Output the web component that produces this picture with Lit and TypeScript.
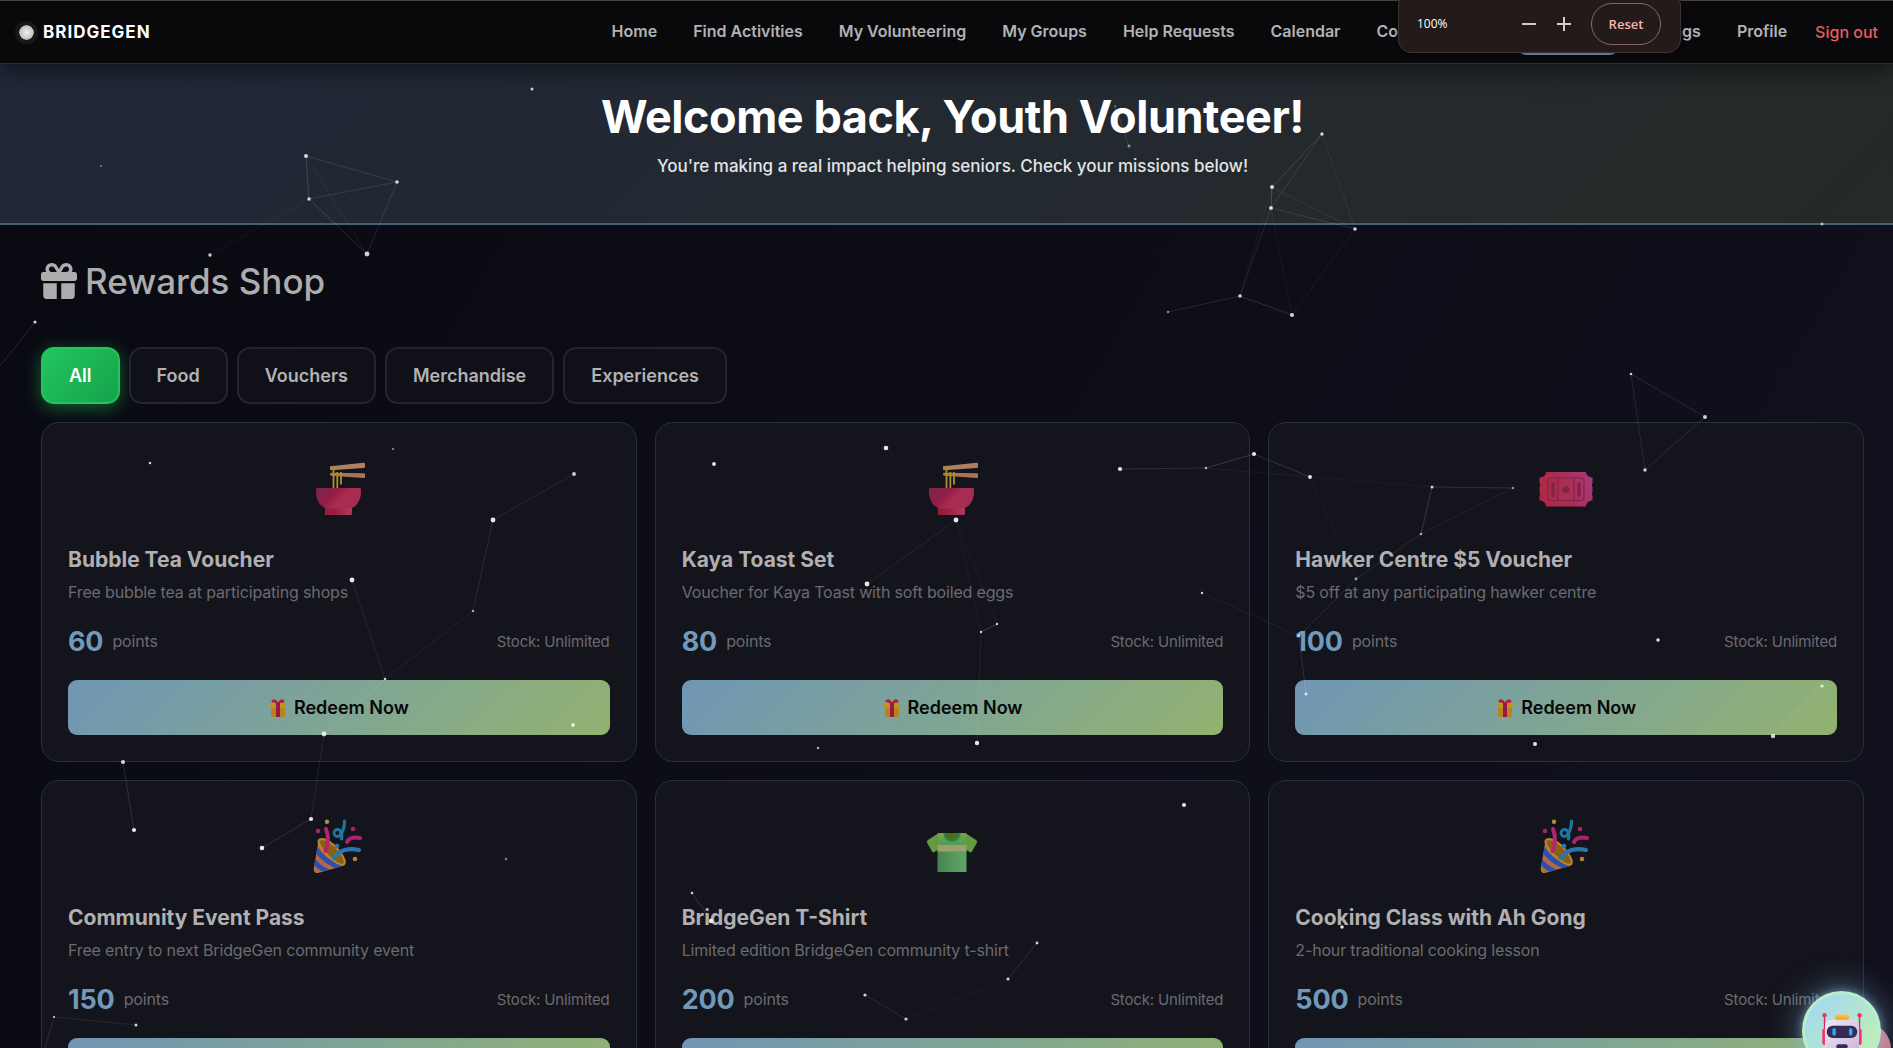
import { LitElement, html, css, svg } from "lit";
import { customElement, property, state } from "lit/decorators.js";
import { classMap } from "lit/directives/class-map.js";

type Art = "noodles" | "ticket" | "party" | "shirt";

interface Reward {
  name: string;
  description: string;
  points: number;
  art: Art;
  category: string;
}

const REWARDS: Reward[] = [
  { name: "Bubble Tea Voucher", description: "Free bubble tea at participating shops", points: 60, art: "noodles", category: "Food" },
  { name: "Kaya Toast Set", description: "Voucher for Kaya Toast with soft boiled eggs", points: 80, art: "noodles", category: "Food" },
  { name: "Hawker Centre $5 Voucher", description: "$5 off at any participating hawker centre", points: 100, art: "ticket", category: "Vouchers" },
  { name: "Community Event Pass", description: "Free entry to next BridgeGen community event", points: 150, art: "party", category: "Experiences" },
  { name: "BridgeGen T-Shirt", description: "Limited edition BridgeGen community t-shirt", points: 200, art: "shirt", category: "Merchandise" },
  { name: "Cooking Class with Ah Gong", description: "2-hour traditional cooking lesson", points: 500, art: "party", category: "Experiences" },
];

const CATEGORIES = ["All", "Food", "Vouchers", "Merchandise", "Experiences"];

const LINKS = [
  "Home", "Find Activities", "My Volunteering", "My Groups", "Help Requests",
  "Calendar", "Communication", "Rewards", "Settings", "Profile",
];

const noodles = svg`
  <defs>
    <linearGradient id="bowl" x1="0" x2="1" y1="0.2" y2="0.6">
      <stop offset="0" stop-color="#7a2744"/><stop offset="0.35" stop-color="#931b48"/>
      <stop offset="0.6" stop-color="#aa2b52"/><stop offset="1" stop-color="#a52c53"/>
    </linearGradient>
    <linearGradient id="foot" x1="0" x2="1" y1="0" y2="0">
      <stop offset="0" stop-color="#8c2136"/><stop offset="0.4" stop-color="#a01d40"/><stop offset="1" stop-color="#b03c60"/>
    </linearGradient>
  </defs>
  <path d="M19 5.2 52.500 1.700Q54 1.600 54 3V5.800Q54 6.800 53 6.900L20 9.200Q19 9.200 19 8Z" fill="#ae7f60"/>
  <path d="M19.500 11.800 53 12.200Q54 12.300 54 13.300V16Q54 17.200 53 17.100L20 14.800Q19 14.600 19 13.200Z" fill="#a87657"/>
  <path d="M22.500 5V28M26.300 11V28M30 11V23.500" stroke="#b08f28" stroke-width="1.800" fill="none"/>
  <path d="M14 45H41L40.800 54H13.800Z" fill="url(#foot)"/>
  <path d="M5 28Q5 27 6 27H49Q50 27 50 28V31C50 39 45.500 47 38 47.500H17C9.500 47 5 39 5 31Z" fill="url(#bowl)"/>`;

const ticket = svg`
  <defs>
    <linearGradient id="tick" x1="0" x2="1" y1="0.6" y2="0.4">
      <stop offset="0" stop-color="#ae2843"/><stop offset="0.55" stop-color="#a92f58"/><stop offset="1" stop-color="#a93779"/>
    </linearGradient>
  </defs>
  <path d="M8 11H48C48 14 51 16.500 54.500 16.500V22A3.300 3.300 0 0 0 54.500 26V31A3.300 3.300 0 0 0 54.500 35V39.500C51 39.500 48 42 48 45.500H8C8 42 5 39.500 1.500 39.500V35A3.300 3.300 0 0 0 1.500 31V26A3.300 3.300 0 0 0 1.500 22V16.500C5 16.500 8 14 8 11Z" fill="url(#tick)"/>
  <g stroke="#842442" fill="none" stroke-width="1.200">
    <rect x="10" y="17" width="36" height="22.500" rx="3"/>
    <path d="M20 17V39.500M36 17V39.500"/>
  </g>
  <g fill="#842442">
    <rect x="13.300" y="21" width="3.400" height="15" rx="1.700"/>
    <rect x="39.300" y="21" width="3.400" height="15" rx="1.700"/>
    <circle cx="28" cy="28.500" r="3.500"/>
  </g>`;

const party = svg`
  <defs>
    <clipPath id="cone"><path d="M7 24.500C6 22 7 20 9.500 20.500 17 21 33 36 34 42 34.500 45 33 46.500 30 47.500L9 53.500C4.500 55 2.500 53 2.800 49Z"/></clipPath>
  </defs>
  <g clip-path="url(#cone)">
    <path d="M0 15H40V56H0Z" fill="#b36943"/>
    <g stroke="#2b50b0" stroke-width="5" fill="none">
      <path d="M3 27Q11 42 30 49"/>
      <path d="M-1 37Q6 49 20 54"/>
    </g>
    <path d="M-4 45Q2 54 10 57" stroke="#b87a38" stroke-width="4" fill="none"/>
  </g>
  <path d="M9 20.500C14 18.500 23 25 28 31.500S35.500 44 32.500 45.500 21 41.500 15 35 5.500 22 9 20.500Z" fill="#876016" stroke="#b8862f" stroke-width="2"/>
  <path d="M15 10C18 17 17.500 24 14.500 32" stroke="#b52370" stroke-width="4" fill="none" stroke-linecap="round"/>
  <path d="M23 39C28 31 38 28.500 48 31" stroke="#2b74b0" stroke-width="4.200" fill="none" stroke-linecap="round"/>
  <path d="M36 23C38 19 43 18 49 19" stroke="#ad2172" stroke-width="4" fill="none" stroke-linecap="round"/>
  <path d="M33.500 2C33.500 7 32.500 12 29.500 15.500M30.500 14Q31 17 30.500 20" stroke="#1f74a0" stroke-width="3.200" fill="none" stroke-linecap="round"/>
  <circle cx="26.500" cy="14" r="3.500" stroke="#1f74a0" stroke-width="2.800" fill="none"/>
  <circle cx="16" cy="2.800" r="2.200" fill="#b18f3e"/>
  <circle cx="7" cy="12" r="2.300" fill="#ab2172"/>
  <circle cx="42" cy="10" r="2.300" fill="#ab2172"/>
  <circle cx="26" cy="27" r="2.300" fill="#2a76b0"/>
  <circle cx="44" cy="40" r="2.300" fill="#b38136"/>`;

const shirt = svg`
  <defs>
    <linearGradient id="body" x1="0" x2="1" y1="0" y2="0">
      <stop offset="0" stop-color="#47814e"/><stop offset="0.6" stop-color="#579c5c"/><stop offset="1" stop-color="#5ba466"/>
    </linearGradient>
    <linearGradient id="yoke" x1="0" x2="0" y1="0" y2="1">
      <stop offset="0" stop-color="#7aa43e"/><stop offset="1" stop-color="#519d57"/>
    </linearGradient>
  </defs>
  <g transform="translate(0 2)">
    <path d="M14 12.500 4 19Q2.500 20 3 21.500L8 30.500Q9 32 10.500 31L14 28.500ZM42 12.500 52 19Q53.500 20 53 21.500L48 30.500Q47 32 45.500 31L42 28.500Z" fill="#659b3e"/>
    <path d="M13.500 12.500H42.500V51H13.500Z" fill="url(#body)"/>
    <path d="M13.500 13Q14 12 16 12H40Q42 12 42.500 13V24H13.500Z" fill="url(#yoke)"/>
    <path d="M13.500 24H42.500V30.500H13.500Z" fill="#9b9f70"/>
    <path d="M20.500 12C20.500 17 24 20 28 20S35.500 17 35.500 12Z" fill="#4f6c18"/>
    <path d="M20.500 12C20.500 17 24 20 28 20S35.500 17 35.500 12" fill="none" stroke="#248a50" stroke-width="2.200"/>
  </g>`;

const ART: Record<Art, unknown> = { noodles, ticket, party, shirt };

@customElement("reward-card")
export class RewardCard extends LitElement {
  @property({ attribute: false }) reward!: Reward;

  static styles = css`
    :host { display: block; }
    .card {
      box-sizing: border-box;
      height: 100%;
      padding: 26px;
      border: 1px solid #27313d;
      border-radius: 18px;
      background: #14141c;
    }
    .art { display: flex; justify-content: center; align-items: center; height: 80px; }
    .art svg { width: 56px; height: 56px; }
    .name { margin: 18px 0 6px; font-size: 21px; line-height: 26px; font-weight: 700; color: #b0b0b1; }
    .description { margin: 0; font-size: 16px; line-height: 26px; color: #6b6b70; letter-spacing: -0.01em; }
    .facts { display: flex; align-items: center; justify-content: space-between; margin: 18px 0 21px; height: 36px; font-size: 16px; color: #6b6b70; letter-spacing: -0.01em; }
    .price { display: flex; align-items: center; gap: 9px; }
    .points { font-size: 27px; font-weight: 700; color: #7199b9; }
    .stock { font-size: 15px; }
    .redeem {
      display: flex;
      align-items: center;
      justify-content: center;
      gap: 7px;
      width: 100%;
      height: 55px;
      padding: 0;
      border: 0;
      border-radius: 9px;
      background: linear-gradient(135deg, #7096b5, #7fa595 50%, #92b26f);
      color: #060807;
      font: 600 18px Inter, "Liberation Sans", sans-serif;
      cursor: pointer;
    }
    .redeem svg { width: 18px; height: 20px; }
  `;

  render() {
    const r = this.reward;
    return html`
      <article class="card">
        <div class="art"><svg viewBox="0 0 56 56" aria-hidden="true">${ART[r.art]}</svg></div>
        <h3 class="name">${r.name}</h3>
        <p class="description">${r.description}</p>
        <div class="facts">
          <span class="price"><span class="points">${r.points}</span><span>points</span></span>
          <span class="stock">Stock: Unlimited</span>
        </div>
        <button class="redeem" type="button">
          <svg viewBox="0 0 18 20" aria-hidden="true">
            <path d="M2 8H16V18Q16 19 15 19H3Q2 19 2 18Z" fill="#b5841f"/>
            <path d="M1 5.500Q1 4.500 2 4.500H16Q17 4.500 17 5.500V9Q17 10 16 10H2Q1 10 1 9Z" fill="#c0902a"/>
            <path d="M7 4H11V19H7Z" fill="#981a42"/>
            <path d="M9 5C7 5 3 5 2.500 3.500S5 1 6 1.500 8.500 3 9 5C9.500 3 11 2 12 1.500S15.500 2 15.500 3.500 11 5 9 5Z" fill="#ad2233"/>
          </svg>
          <span>Redeem Now</span>
        </button>
      </article>
    `;
  }
}

/* Particles: x, y, radius, brightness. */
const DOTS: number[][] = [
  [532, 89, 1.5, 0.8], [101, 166, 1, 0.4], [306, 156, 2, 0.8], [397, 182, 1.8, 0.8], [309, 199, 1.7, 0.8],
  [367, 254, 2.400, 0.8], [210, 255, 1.7, 0.8], [35, 322, 1.6, 0.8], [909, 135, 1.7, 0.6], [1115, 106, 1, 0.4],
  [1129, 146, 1.500, 0.5], [1168, 312, 1.300, 0.5], [1322, 134, 1.700, 0.8], [1272, 187, 2, 0.8], [1271, 208, 2, 0.8],
  [1355, 229, 1.800, 0.8], [1292, 315, 2.100, 0.8], [1240, 296, 1.800, 0.8], [1822, 224, 1.600, 0.6], [1631, 374, 1.300, 0.8],
  [1705, 417, 2, 0.8], [1645, 470, 1.700, 0.8], [150, 463, 1.300, 0.8], [393, 449, 1, 0.6], [574, 474, 1.900, 0.8],
  [493, 520, 2.400, 0.9], [473, 611, 1.300, 0.6], [352, 580, 2.400, 0.9], [385, 679, 1.300, 0.8], [324, 734, 2.400, 0.8],
  [573, 725, 1.900, 0.8], [123, 762, 2.100, 0.8], [311, 819, 2.100, 0.9], [262, 848, 2.300, 0.9], [134, 830, 2.100, 0.9],
  [506, 859, 1.200, 0.5], [54, 1017, 1.100, 0.8], [136, 1025, 1.500, 0.8], [714, 464, 1.900, 0.9], [886, 448, 2.300, 0.9],
  [956, 520, 2.400, 0.9], [867, 584, 2.400, 0.9], [997, 624, 1.200, 0.8], [981, 632, 1.200, 0.8], [977, 743, 2.200, 0.9],
  [818, 748, 1.200, 0.7], [1120, 469, 2.100, 0.9], [1206, 468, 1.200, 0.7], [1254, 454, 2.100, 0.9], [1202, 593, 1.200, 0.8],
  [1310, 477, 1.900, 0.9], [1432, 487, 1.500, 0.8], [1513, 488, 1.200, 0.5], [1421, 534, 1.300, 0.6], [1356, 579, 1.400, 0.6],
  [1299, 636, 1.400, 0.7], [1306, 694, 1.400, 0.8], [1658, 640, 1.700, 0.9], [1535, 744, 2, 0.9], [1822, 686, 1.600, 0.8],
  [1773, 736, 2.200, 0.8], [692, 893, 1.300, 0.8], [711, 921, 2.200, 0.9], [1184, 805, 2, 0.9], [1037, 943, 1.400, 0.8],
  [1008, 979, 1.600, 0.8], [906, 1019, 1.600, 0.8], [865, 995, 1.600, 0.8], [1342, 927, 1.700, 0.9],
];

/* Links: x1, y1, x2, y2, opacity. */
const EDGES: number[][] = [
  [306, 156, 397, 182, 0.1], [306, 156, 309, 199, 0.15], [397, 182, 309, 199, 0.1], [309, 199, 367, 254, 0.12],
  [306, 156, 367, 254, 0.05], [397, 182, 367, 254, 0.1], [309, 199, 210, 255, 0.05], [35, 322, 0, 366, 0.12],
  [1115, 106, 1129, 146, 0.12], [1322, 134, 1272, 187, 0.12], [1322, 134, 1271, 208, 0.1], [1322, 134, 1355, 229, 0.06],
  [1272, 187, 1271, 208, 0.18], [1272, 187, 1355, 229, 0.07], [1271, 208, 1355, 229, 0.1], [1272, 187, 1240, 296, 0.05],
  [1271, 208, 1240, 296, 0.1], [1271, 208, 1292, 315, 0.05], [1355, 229, 1292, 315, 0.06], [1240, 296, 1292, 315, 0.14],
  [1240, 296, 1168, 312, 0.1], [1631, 374, 1705, 417, 0.1], [1705, 417, 1645, 470, 0.1], [1631, 374, 1645, 470, 0.09],
  [574, 474, 493, 520, 0.09], [493, 520, 473, 611, 0.09], [473, 611, 385, 679, 0.06], [352, 580, 385, 679, 0.07],
  [385, 679, 324, 734, 0.12], [393, 449, 493, 520, 0.02], [324, 734, 311, 819, 0.08], [311, 819, 262, 848, 0.12],
  [123, 762, 134, 830, 0.12], [54, 1017, 136, 1025, 0.08], [54, 1017, 45, 1048, 0.1], [136, 1025, 110, 1043, 0.02],
  [886, 448, 956, 520, 0.06], [956, 520, 867, 584, 0.07], [956, 520, 997, 624, 0.04], [956, 520, 981, 632, 0.04],
  [997, 624, 981, 632, 0.2], [981, 632, 977, 743, 0.06], [997, 624, 977, 743, 0.02], [1120, 469, 1206, 468, 0.12],
  [1206, 468, 1254, 454, 0.15], [1206, 468, 1202, 593, 0.02], [1202, 593, 1299, 636, 0.06], [1254, 454, 1310, 477, 0.13],
  [1206, 468, 1310, 477, 0.05], [1310, 477, 1356, 579, 0.04], [1310, 477, 1432, 487, 0.03], [1432, 487, 1513, 488, 0.12],
  [1432, 487, 1421, 534, 0.15], [1513, 488, 1421, 534, 0.07], [1421, 534, 1356, 579, 0.1], [1432, 487, 1356, 579, 0.02],
  [1356, 579, 1299, 636, 0.1], [1299, 636, 1306, 694, 0.12], [1822, 686, 1773, 736, 0.15], [692, 893, 711, 921, 0.12],
  [1037, 943, 1008, 979, 0.12], [1008, 979, 906, 1019, 0.04], [906, 1019, 865, 995, 0.1],
];

@customElement("app-root")
export class AppRoot extends LitElement {
  @state() private category = "All";

  static styles = css`
    :host {
      display: flex;
      flex-direction: column;
      position: relative;
      height: 100vh;
      overflow: hidden;
      background: linear-gradient(120deg, #090911, #0c0c16 35%, #11101d);
      font-family: Inter, "Liberation Sans", sans-serif;
      color: #b0b0b1;
    }
    .bar {
      position: relative;
      z-index: 1;
      display: flex;
      align-items: center;
      justify-content: space-between;
      box-sizing: border-box;
      flex: none;
      height: 64px;
      padding: 0 15px;
      border-top: 1px solid #4b3f40;
      border-bottom: 1px solid #273039;
      background: #09090b;
      box-shadow: 0 6px 22px rgba(0, 0, 0, 0.5);
    }
    .brand { display: flex; align-items: center; gap: 5px; color: #fff; font-size: 17px; font-weight: 700; letter-spacing: 1px; text-decoration: none; }
    .orb { width: 15px; height: 15px; border: 4px solid #18181a; border-radius: 50%; background: radial-gradient(#eee, #aaa); background-clip: padding-box; }
    .links { display: flex; align-items: center; align-self: stretch; }
    .link { display: flex; align-items: center; height: 44px; padding: 0 18px; border-bottom: 2px solid transparent; border-radius: 9px; color: #b2b2b3; font-size: 16px; font-weight: 600; text-decoration: none; white-space: nowrap; }
    .current { border-bottom-color: #7db4e2; color: #fff; }
    .signout { padding-left: 10px; color: #e85c60; font-size: 16px; font-weight: 500; text-decoration: none; }
    .page { flex: 1; min-height: 0; overflow-y: auto; scrollbar-width: none; }
    .hero {
      padding: 25px 0 46px 12px;
      border-bottom: 2px solid #485f72;
      background: linear-gradient(135deg, #202738, #222932 40%, #252928);
      text-align: center;
    }
    .welcome { margin: 0; font-size: 45px; line-height: 56px; font-weight: 700; letter-spacing: -0.01em; color: #fff; }
    .mission { margin: 10px 0 0; font-size: 17px; line-height: 22px; font-weight: 500; color: #e2e4e5; }
    .shop { padding: 34px 29px 36px 41px; }
    .heading { display: flex; align-items: center; gap: 8px; margin: 0; font-size: 35px; line-height: 44px; font-weight: 500; color: #adadae; }
    .heading svg { width: 36px; height: 36px; fill: currentColor; }
    .filters { display: flex; flex-wrap: wrap; gap: 9px; margin: 44px 0 18px; }
    .filter { height: 57px; padding: 0 26px; border: 2px solid #25252d; border-radius: 13px; background: #101018; color: #b2b2b4; font: 600 18px Inter, "Liberation Sans", sans-serif; cursor: pointer; }
    .active { border-color: #22c55e; background: linear-gradient(135deg, #22c55e, #16a34a); color: #fff; box-shadow: 0 4px 18px rgba(34, 197, 94, 0.45); }
    .grid { display: grid; grid-template-columns: repeat(3, 1fr); gap: 18px; }
    .particles { position: absolute; inset: 0; width: 100%; height: 100%; pointer-events: none; }
    .zoom {
      position: absolute;
      z-index: 2;
      top: -8px;
      right: 212px;
      display: flex;
      align-items: center;
      box-sizing: border-box;
      width: 283px;
      height: 61px;
      padding: 2px 19px 0 18px;
      border: 1px solid #40322f;
      border-radius: 13px;
      background: #231b1a;
      color: #fff;
      font-family: "Open Sans", "Noto Sans", sans-serif;
      font-size: 12px;
      box-shadow: 0 2px 5px rgba(0, 0, 0, 0.5);
    }
    .level { flex: 1; }
    .step { display: flex; justify-content: center; align-items: center; width: 35px; height: 35px; padding: 0; border: 0; background: none; color: #d8c9c8; }
    .step svg { width: 14px; height: 14px; stroke: currentColor; stroke-width: 2; }
    .reset { width: 70px; height: 42px; margin-left: 10px; padding: 0; border: 1px solid #8d666b; border-radius: 21px; background: none; color: #ffb1b3; font: 600 13px "Open Sans", "Noto Sans", sans-serif; }
    .helper { position: absolute; z-index: 1; right: 12px; bottom: -22px; width: 79px; height: 79px; }
    .badge { position: absolute; left: 37px; top: 32px; width: 52px; height: 52px; border-radius: 50%; background: #cf7883; }
    .bot { position: absolute; inset: 0; display: flex; align-items: center; justify-content: center; padding: 0; border: 3px solid #b8efc9; border-radius: 50%; background: linear-gradient(135deg, #9fd6f7, #c6f3ac); box-shadow: 0 0 34px rgba(130, 185, 230, 0.6), 0 0 9px rgba(160, 210, 240, 0.5); }
    .bot svg { width: 42px; height: 42px; }
  `;

  render() {
    const shown = REWARDS.filter((r) => this.category === "All" || r.category === this.category);
    return html`
      <header class="bar">
        <a class="brand" href="#home"><span class="orb"></span>BRIDGEGEN</a>
        <nav class="links" aria-label="Main">
          ${LINKS.map((text) => html`
            <a class=${classMap({ link: true, current: text === "Rewards" })} href="#${text.toLowerCase().replace(" ", "-")}">${text}</a>`)}
          <a class="signout" href="#sign-out">Sign out</a>
        </nav>
      </header>

      <div class="page">
        <section class="hero">
          <h1 class="welcome">Welcome back, Youth Volunteer!</h1>
          <p class="mission">You're making a real impact helping seniors. Check your missions below!</p>
        </section>
        <main class="shop">
          <h2 class="heading">
            <svg viewBox="0 0 512 512" aria-hidden="true"><path d="M190.500 68.800L225.300 128H224 152c-22.100 0-40-17.900-40-40s17.900-40 40-40h2.200c14.900 0 28.800 7.900 36.300 20.800zM64 88c0 14.400 3.500 28 9.600 40H32c-17.700 0-32 14.300-32 32v64c0 17.700 14.300 32 32 32H480c17.700 0 32-14.300 32-32V160c0-17.700-14.300-32-32-32H438.400c6.100-12 9.600-25.600 9.600-40c0-48.600-39.400-88-88-88h-2.200c-31.900 0-61.500 16.900-77.700 44.400L256 85.500l-24.100-41C215.700 16.900 186.100 0 154.200 0H152C103.400 0 64 39.400 64 88zm336 0c0 22.100-17.900 40-40 40H288h-1.300l34.800-59.200C329.100 55.900 342.900 48 357.800 48H360c22.100 0 40 17.900 40 40zM32 288V464c0 26.500 21.500 48 48 48H224V288H32zM288 512H432c26.500 0 48-21.500 48-48V288H288V512z"/></svg>
            Rewards Shop
          </h2>
          <div class="filters">
            ${CATEGORIES.map((c) => html`
              <button type="button" class=${classMap({ filter: true, active: c === this.category })}
                aria-pressed=${c === this.category ? "true" : "false"} @click=${() => (this.category = c)}>${c}</button>`)}
          </div>
          <div class="grid">
            ${shown.map((r) => html`<reward-card .reward=${r}></reward-card>`)}
          </div>
        </main>
      </div>

      <svg class="particles" aria-hidden="true">
        ${EDGES.map(([a, b, c, d, o]) => svg`<line x1=${a} y1=${b} x2=${c} y2=${d} stroke="#fff" stroke-opacity=${o}/>`)}
        ${DOTS.map(([x, y, r, o]) => svg`<circle cx=${x} cy=${y} r=${r} fill="#fff" fill-opacity=${o}/>`)}
      </svg>

      <div class="zoom" role="group" aria-label="Zoom">
        <span class="level">100%</span>
        <button class="step" type="button" aria-label="Zoom out"><svg viewBox="0 0 14 14"><path d="M0 7H14"/></svg></button>
        <button class="step" type="button" aria-label="Zoom in"><svg viewBox="0 0 14 14"><path d="M0 7H14M7 0V14"/></svg></button>
        <button class="reset" type="button">Reset</button>
      </div>

      <div class="helper">
        <span class="badge"></span>
        <button class="bot" type="button" aria-label="Open assistant">
          <svg viewBox="0 0 48 48" aria-hidden="true">
            <defs>
              <linearGradient id="head" x1="0" x2="1" y1="0" y2="1"><stop offset="0" stop-color="#efe6f6"/><stop offset="1" stop-color="#cdb6dc"/></linearGradient>
              <linearGradient id="knob" x1="0" x2="0" y1="0" y2="1"><stop offset="0" stop-color="#ffcb3c"/><stop offset="1" stop-color="#ef9f2e"/></linearGradient>
            </defs>
            <path d="M4 6V22M44 6V22" stroke="#c52a58" stroke-width="1.500"/>
            <circle cx="4" cy="6" r="2.500" fill="#f5306a"/><circle cx="44" cy="6" r="2.500" fill="#f5306a"/>
            <rect x="1.500" y="21" width="5" height="19" rx="2.500" fill="#f5306a"/><rect x="41.500" y="21" width="5" height="19" rx="2.500" fill="#f5306a"/>
            <rect x="4.500" y="11" width="39" height="37" rx="7" fill="url(#head)"/>
            <rect x="16" y="5" width="16" height="6" rx="3" fill="url(#knob)"/>
            <rect x="6.500" y="18" width="35" height="14" rx="7" fill="#372a52"/>
            <rect x="13" y="20.500" width="4" height="9" rx="2" fill="#2aa8f2"/><rect x="32" y="20.500" width="4" height="9" rx="2" fill="#2aa8f2"/>
            <rect x="17.500" y="39" width="13" height="5" rx="2.500" fill="#372a52"/>
          </svg>
        </button>
      </div>
    `;
  }
}
